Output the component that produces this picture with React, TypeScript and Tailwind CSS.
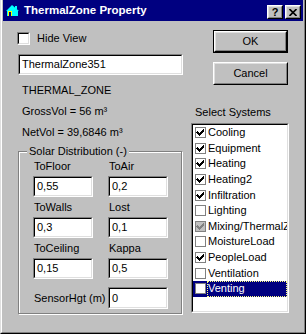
import React from "react";

function Sunken({ className = "", children }: { className?: string; children?: React.ReactNode }) {
  return (
    <div className={"border border-t-[#808080] border-l-[#808080] border-b-white border-r-white " + className}>
      <div className="w-full h-full border border-t-black border-l-black border-b-[#dfdfdf] border-r-[#dfdfdf] bg-white flex items-center overflow-hidden">
        {children}
      </div>
    </div>
  );
}

function Field({ value, className = "" }: { value: string; className?: string }) {
  return (
    <Sunken className={"h-[21px] " + className}>
      <span className="pl-[2px] text-[11px] leading-[13px] text-black whitespace-nowrap">{value}</span>
    </Sunken>
  );
}

function Raised({ className = "", children }: { className?: string; children?: React.ReactNode }) {
  return (
    <div className={"border border-t-white border-l-white border-b-black border-r-black bg-[#c0c0c0] " + className}>
      <div className="w-full h-full border border-t-[#dfdfdf] border-l-[#dfdfdf] border-b-[#808080] border-r-[#808080] flex items-center justify-center">
        {children}
      </div>
    </div>
  );
}

function Check({ color = "#000" }: { color?: string }) {
  return (
    <svg width="9" height="9" viewBox="0 0 9 9" className="block">
      <path d="M1 4 L3.5 6.5 L8 1.5" stroke={color} strokeWidth="2" fill="none" shapeRendering="crispEdges" />
    </svg>
  );
}

const items: { name: string; checked: boolean; disabled?: boolean; selected?: boolean }[] = [
  { name: "Cooling", checked: true },
  { name: "Equipment", checked: true },
  { name: "Heating", checked: true },
  { name: "Heating2", checked: true },
  { name: "Infiltration", checked: true },
  { name: "Lighting", checked: false },
  { name: "Mixing/ThermalZone", checked: true, disabled: true },
  { name: "MoistureLoad", checked: false },
  { name: "PeopleLoad", checked: true },
  { name: "Ventilation", checked: false },
  { name: "Venting", checked: false, selected: true },
];

function HouseIcon() {
  return (
    <svg width="14" height="12" viewBox="0 0 14 12" className="block">
      <polygon points="6,0 13,6 12,6 12,11 1,11 1,6 0,6" fill="#00ffff" />
      <rect x="2" y="6" width="4" height="5" fill="#ffff00" />
      <rect x="3" y="7" width="2" height="4" fill="#000080" />
      <rect x="9" y="1" width="2" height="3" fill="#00ffff" />
    </svg>
  );
}

export default function App() {
  return (
    <div className="w-[306px] h-[334px] bg-[#c0c0c0] font-['Liberation_Sans',Arial,sans-serif] text-black text-[11px] leading-[13px] overflow-hidden">
      <div className="w-full h-full border-l border-r border-b border-l-[#dfdfdf] border-r-black border-b-black">
        <div className="w-full h-full border-l border-r border-b border-l-white border-r-[#808080] border-b-[#808080] pl-[1px] pr-[1px] pb-[1px] flex flex-col">
          {/* Title bar */}
          <div className="h-[21px] bg-[#000080] flex items-start pl-[3px] pr-[2px] shrink-0">
            <div className="mt-[5px]">
              <HouseIcon />
            </div>
            <span className="ml-[4px] mt-[4px] text-white font-bold text-[11.5px] leading-[13px] whitespace-nowrap">
              ThermalZone Property
            </span>
            <div className="ml-auto mt-[5px] flex gap-[2px]">
              <Raised className="w-[16px] h-[14px]">
                <span className="font-bold text-[11px] leading-[10px] text-black">?</span>
              </Raised>
              <Raised className="w-[16px] h-[14px]">
                <svg width="8" height="7" viewBox="0 0 8 7" className="block">
                  <path d="M0.5 0 L7.5 7 M7.5 0 L0.5 7" stroke="#000" strokeWidth="1.6" />
                </svg>
              </Raised>
            </div>
          </div>

          {/* Body */}
          <div className="flex flex-1 pl-[15px]">
            {/* Left column */}
            <div className="w-[165px] flex flex-col">
              <div className="mt-[11px] -ml-[1px] flex items-center h-[13px]">
                <Sunken className="w-[13px] h-[13px]" />
                <span className="ml-[7px]">Hide View</span>
              </div>
              <Field value="ThermalZone351" className="mt-[9px] w-[165px]" />
              <div className="mt-[9px] pl-[4px]">THERMAL_ZONE</div>
              <div className="mt-[8px] pl-[4px]">GrossVol = 56 m³</div>
              <div className="mt-[8px] pl-[4px]">NetVol = 39,6846 m³</div>

              {/* Group box */}
              <div className="relative mt-[12px] w-[164px] border border-[#808080] shadow-[inset_1px_1px_0_#fff,1px_1px_0_#fff] pt-[8px] pl-[14px] pb-[4px]">
                <span className="absolute -top-[7px] left-[8px] px-[2px] bg-[#c0c0c0] whitespace-nowrap">
                  Solar Distribution (-)
                </span>
                <div className="grid grid-cols-[60px_60px] gap-x-[15px]">
                  {[
                    ["ToFloor", "0,55", "ToAir", "0,2"],
                    ["ToWalls", "0,3", "Lost", "0,1"],
                    ["ToCeiling", "0,15", "Kappa", "0,5"],
                  ].map((r, i) => (
                    <React.Fragment key={i}>
                      <div className={(i > 0 ? "mt-[4px] " : "") + "flex flex-col"}>
                        <span className="pl-[1px]">{r[0]}</span>
                        <Field value={r[1]} className="mt-[3px] w-[60px]" />
                      </div>
                      <div className={(i > 0 ? "mt-[4px] " : "") + "flex flex-col"}>
                        <span className="pl-[1px]">{r[2]}</span>
                        <Field value={r[3]} className="mt-[3px] w-[60px]" />
                      </div>
                    </React.Fragment>
                  ))}
                </div>
                <div className="mt-[8px] flex items-center">
                  <span className="pl-[1px] w-[75px] whitespace-nowrap">SensorHgt (m)</span>
                  <Field value="0" className="w-[60px] h-[22px]" />
                </div>
              </div>
            </div>

            {/* Right column */}
            <div className="ml-[8px] w-[98px] flex flex-col">
              <div className="mt-[9px] ml-[22px] w-[75px] h-[23px] border border-black">
                <Raised className="w-full h-full">
                  <span>OK</span>
                </Raised>
              </div>
              <Raised className="mt-[9px] ml-[22px] w-[75px] h-[23px]">
                <span>Cancel</span>
              </Raised>
              <div className="mt-[21px] pl-[4px]">Select Systems</div>
              <div className="mt-[4px] w-[98px] h-[190px] border border-t-[#808080] border-l-[#808080] border-b-white border-r-white">
                <div className="w-full h-full border border-t-black border-l-black border-b-[#dfdfdf] border-r-[#dfdfdf] bg-white overflow-hidden">
                  {items.map((it) => (
                    <div
                      key={it.name}
                      className={
                        "h-[15.6px] flex items-center pl-[2px] whitespace-nowrap " +
                        (it.selected ? "bg-[#000080] text-white" : "text-black")
                      }
                    >
                      <div
                        className={
                          "w-[11px] h-[11px] border border-[#808080] flex items-center justify-center shrink-0 " +
                          (it.disabled ? "bg-[#c0c0c0]" : "bg-white")
                        }
                      >
                        {it.checked && <Check color={it.disabled ? "#808080" : "#000"} />}
                      </div>
                      <span
                        className={
                          "ml-[1px] pl-[1px] h-full flex items-center flex-1 " +
                          (it.selected ? "outline outline-1 outline-dotted outline-[#ffff80] -outline-offset-1" : "")
                        }
                      >
                        {it.name}
                      </span>
                    </div>
                  ))}
                </div>
              </div>
            </div>
          </div>
        </div>
      </div>
    </div>
  );
}
